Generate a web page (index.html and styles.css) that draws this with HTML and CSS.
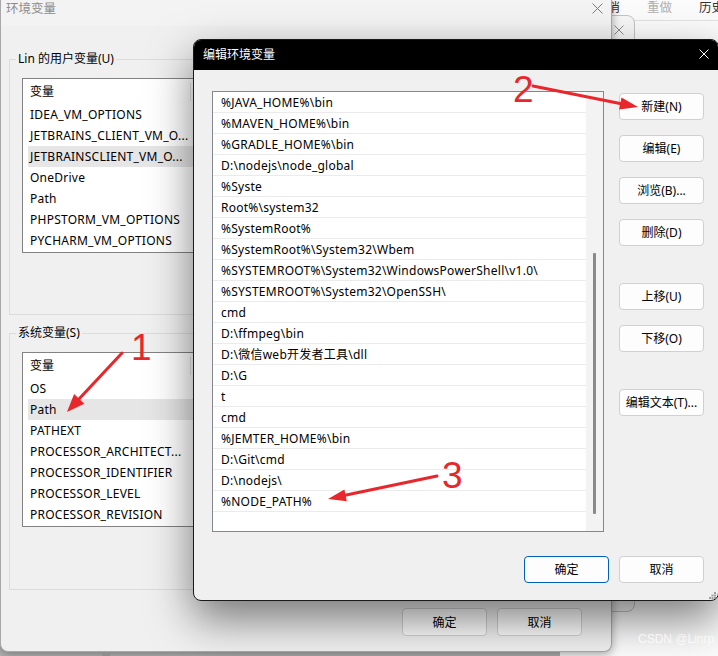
FILE: index.html
```html
<!DOCTYPE html>
<html lang="zh-CN">
<head>
<meta charset="utf-8">
<title>编辑环境变量</title>
<link rel="stylesheet" href="styles.css">
</head>
<body>
<div class="desktop">
  <div class="app">
    <div class="app-menu">
      <span class="menu-item">撤消</span>
      <span class="menu-item muted">重做</span>
      <span class="menu-item">历史</span>
    </div>
  </div>

  <div class="mid-win">
    <div class="mid-head">
      <svg class="x-icon" width="10" height="10" viewBox="0 0 10 10"><path d="M0.5 0.5L9.5 9.5M9.5 0.5L0.5 9.5" stroke="#8a8a8a" stroke-width="1"/></svg>
    </div>
  </div>

  <div class="env-win">
    <div class="env-title">
      <span>环境变量</span>
      <svg class="x-icon back-x" width="11" height="11" viewBox="0 0 11 11"><path d="M0.5 0.5L10.5 10.5M10.5 0.5L0.5 10.5" stroke="#7a7a7a" stroke-width="1"/></svg>
    </div>

    <fieldset class="group">
      <legend>Lin 的用户变量(U)</legend>
      <div class="varlist">
        <div class="vhead"><span class="vhead-cell">变量</span></div>
        <div class="vrow">IDEA_VM_OPTIONS</div>
        <div class="vrow">JETBRAINS_CLIENT_VM_O...</div>
        <div class="vrow sel">JETBRAINSCLIENT_VM_O...</div>
        <div class="vrow">OneDrive</div>
        <div class="vrow">Path</div>
        <div class="vrow">PHPSTORM_VM_OPTIONS</div>
        <div class="vrow">PYCHARM_VM_OPTIONS</div>
      </div>
    </fieldset>

    <fieldset class="group group-sys">
      <legend>系统变量(S)</legend>
      <div class="varlist">
        <div class="vhead"><span class="vhead-cell">变量</span></div>
        <div class="vrow">OS</div>
        <div class="vrow sel">Path</div>
        <div class="vrow">PATHEXT</div>
        <div class="vrow">PROCESSOR_ARCHITECT...</div>
        <div class="vrow">PROCESSOR_IDENTIFIER</div>
        <div class="vrow">PROCESSOR_LEVEL</div>
        <div class="vrow">PROCESSOR_REVISION</div>
      </div>
    </fieldset>

    <div class="env-foot">
      <button class="btn back-btn">确定</button>
      <button class="btn back-btn">取消</button>
    </div>
  </div>

  <div class="task-tick"></div>

  <div class="edit-dlg">
    <div class="edit-title">
      <span>编辑环境变量</span>
      <svg class="x-icon" width="10" height="10" viewBox="0 0 10 10"><path d="M0.5 0.5L9.5 9.5M9.5 0.5L0.5 9.5" stroke="#ffffff" stroke-width="1"/></svg>
    </div>
    <div class="edit-body">
      <div class="pathlist">
        <div class="path-rows">
          <div class="prow">%JAVA_HOME%\bin</div>
          <div class="prow">%MAVEN_HOME%\bin</div>
          <div class="prow">%GRADLE_HOME%\bin</div>
          <div class="prow">D:\nodejs\node_global</div>
          <div class="prow">%Syste</div>
          <div class="prow">Root%\system32</div>
          <div class="prow">%SystemRoot%</div>
          <div class="prow">%SystemRoot%\System32\Wbem</div>
          <div class="prow">%SYSTEMROOT%\System32\WindowsPowerShell\v1.0\</div>
          <div class="prow">%SYSTEMROOT%\System32\OpenSSH\</div>
          <div class="prow">cmd</div>
          <div class="prow">D:\ffmpeg\bin</div>
          <div class="prow">D:\微信web开发者工具\dll</div>
          <div class="prow">D:\G</div>
          <div class="prow">t</div>
          <div class="prow">cmd</div>
          <div class="prow">%JEMTER_HOME%\bin</div>
          <div class="prow">D:\Git\cmd</div>
          <div class="prow">D:\nodejs\</div>
          <div class="prow">%NODE_PATH%</div>
        </div>
        <div class="scroll-col"><div class="thumb"></div></div>
      </div>
      <div class="btn-col">
        <button class="btn">新建(N)</button>
        <button class="btn">编辑(E)</button>
        <button class="btn">浏览(B)...</button>
        <button class="btn">删除(D)</button>
        <button class="btn sep">上移(U)</button>
        <button class="btn">下移(O)</button>
        <button class="btn sep">编辑文本(T)...</button>
      </div>
    </div>
    <div class="edit-foot">
      <button class="btn primary">确定</button>
      <button class="btn">取消</button>
    </div>
    <svg class="grip" width="7" height="7" viewBox="0 0 7 7"><g fill="#a0a0a0"><rect x="5" y="0" width="2" height="2"/><rect x="5" y="2.5" width="2" height="2"/><rect x="2.5" y="2.5" width="2" height="2"/><rect x="5" y="5" width="2" height="2"/><rect x="2.5" y="5" width="2" height="2"/><rect x="0" y="5" width="2" height="2"/></g></svg>
  </div>

  <svg class="annot" width="718" height="656" viewBox="0 0 718 656">
    <g stroke="#e8262b" stroke-width="3" stroke-linecap="round" fill="#e8262b">
      <line x1="122" y1="353" x2="79" y2="399"/>
      <line x1="533" y1="86" x2="620" y2="103.5"/>
      <line x1="437" y1="476" x2="345" y2="495.3"/>
    </g>
    <g fill="#e8262b">
      <polygon points="67,412 84.3,403.7 74.1,394.1"/>
      <polygon points="638,107 619.1,109.4 621.5,97.6"/>
      <polygon points="328,499 344.4,489.4 346.8,501.2"/>
    </g>
  </svg>
  <span class="num num1">1</span>
  <span class="num num2">2</span>
  <span class="num num3">3</span>

  <div class="watermark">CSDN @Linrp</div>
</div>
</body>
</html>
```

FILE: styles.css
```css
* { box-sizing: border-box; }
html, body { margin: 0; padding: 0; }
body {
  font-family: "Noto Sans", "Noto Sans CJK SC", sans-serif;
  font-size: 12px;
  color: #000;
}
.desktop {
  position: relative;
  width: 718px;
  height: 656px;
  overflow: hidden;
  background: #b4b4b4;
}

/* app behind, top-right */
.app {
  position: absolute;
  left: 560px;
  top: 0;
  width: 220px;
  height: 656px;
  background: #fbfbfb;
}
.app-menu {
  display: flex;
  gap: 27px;
  padding-left: 35px;
  height: 21px;
  border-bottom: 1px solid #e2e2e2;
  align-items: flex-start;
  font-size: 12.5px;
  line-height: 16px;
  white-space: nowrap;
}
.menu-item { color: #333; flex: none; }
.menu-item.muted { color: #b0b0b0; }

/* middle window */
.mid-win {
  position: absolute;
  left: 540px;
  top: 15px;
  width: 95px;
  height: 597px;
  background: #f7f7f7;
  border: 1px solid #c4c4c4;
  border-radius: 8px;
}
.mid-head {
  display: flex;
  justify-content: flex-end;
  padding: 9px 10px 0 0;
}
.x-icon { display: block; flex: none; }

/* back window */
.env-win {
  position: absolute;
  left: 0;
  top: 0;
  width: 612px;
  height: 652px;
  background: #f0f0f0;
  border: 1px solid #a8a8a8;
  border-top: none;
  border-radius: 0 0 8px 8px;
  box-shadow: 0 2px 10px rgba(0,0,0,0.35);
  display: flex;
  flex-direction: column;
}
.env-title {
  height: 26px;
  flex: none;
  display: flex;
  justify-content: space-between;
  align-items: flex-start;
  padding: 0 8px 0 5px;
  line-height: 17px;
  font-size: 12.5px;
  color: #8c8c8c;
  background: #f3f3f3;
}
.back-x { margin-top: 3px; }

.group {
  margin: 25px 8px 0 8px;
  padding: 11px 6px 61px 6px;
  border: 1px solid #dcdcdc;
  min-width: 0;
}
.group-sys {
  margin-top: 10px;
  padding-bottom: 62px;
}
.group legend {
  padding: 0 2px;
  line-height: 16px;
  font-size: 12px;
}
.varlist {
  margin-left: 6px;
  height: 175px;
  border: 1px solid #828282;
  background: #fff;
}
.vhead {
  height: 25px;
  display: flex;
  align-items: center;
}
.vhead-cell {
  margin-left: 5px;
  padding-left: 2px;
  width: 163px;
  line-height: 18px;
  border-right: 1px solid #e3e3e3;
}
.vrow {
  height: 21px;
  line-height: 21px;
  margin-left: 5px;
  padding-left: 2px;
  white-space: nowrap;
  letter-spacing: 0.25px;
}
.vrow.sel { background: #e6e6e6; }

.env-foot {
  margin-top: 18px;
  display: flex;
  justify-content: flex-end;
  gap: 10px;
  padding-right: 29px;
}

/* buttons */
.btn {
  font-family: "Noto Sans", "Noto Sans CJK SC", sans-serif;
  font-size: 12px;
  color: #000;
  width: 85px;
  height: 27px;
  padding: 0;
  background: #fdfdfd;
  border: 1px solid #d0d0d0;
  border-radius: 4px;
  line-height: 25px;
  text-align: center;
}
.back-btn { height: 28px; }
.btn.primary { border-color: #005fb8; }

.task-tick {
  position: absolute;
  left: 102px;
  top: 652px;
  width: 8px;
  height: 4px;
  background: #8e8e8e;
}

/* front dialog */
.edit-dlg {
  position: absolute;
  left: 193px;
  top: 39px;
  width: 526px;
  height: 562px;
  border: 1px solid #1a1a1a;
  border-radius: 8px;
  background: #f0f0f0;
  box-shadow: 0 18px 44px rgba(0,0,0,0.5);
  overflow: hidden;
  display: flex;
  flex-direction: column;
}
.edit-title {
  height: 30px;
  flex: none;
  background: #000;
  color: #fff;
  display: flex;
  align-items: center;
  justify-content: space-between;
  padding: 0 9px 2px 9px;
  font-size: 12px;
}
.edit-body {
  display: flex;
  gap: 15px;
  padding: 21px 0 0 18px;
}
.pathlist {
  width: 392px;
  height: 441px;
  border: 1px solid #828790;
  background: #fff;
  display: flex;
  flex: none;
}
.path-rows { width: 373px; }
.prow {
  height: 21px;
  line-height: 18px;
  padding-top: 2px;
  padding-left: 8px;
  border-bottom: 1px solid #ebebeb;
  white-space: nowrap;
  letter-spacing: 0.25px;
}
.scroll-col {
  width: 17px;
  background: #f3f3f3;
  padding-top: 161px;
}
.thumb {
  margin-left: 7px;
  width: 3px;
  height: 261px;
  background: #8a8a8a;
  border-radius: 1px;
}
.btn-col {
  display: flex;
  flex-direction: column;
  gap: 15px;
  padding-top: 2px;
}
.btn-col .sep { margin-top: 22px; }

.edit-foot {
  margin-top: 24px;
  display: flex;
  justify-content: flex-end;
  gap: 10px;
  padding-right: 14px;
}
.grip {
  position: absolute;
  right: 2px;
  bottom: 1px;
}

/* annotations */
.annot {
  position: absolute;
  left: 0;
  top: 0;
  pointer-events: none;
}
.num {
  position: absolute;
  font-family: "Liberation Sans", sans-serif;
  font-size: 37px;
  line-height: 1;
  color: #e8262b;
}
.num1 { left: 131px; top: 329px; }
.num2 { left: 513px; top: 71px; }
.num3 { left: 442px; top: 457px; }

.watermark {
  position: absolute;
  left: 638px;
  top: 632px;
  font-family: "Liberation Sans", sans-serif;
  font-size: 12px;
  color: rgba(255,255,255,0.75);
}
```
